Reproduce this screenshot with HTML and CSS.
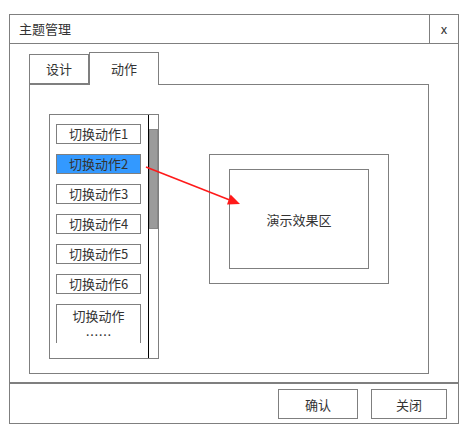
FILE: index.html
```html
<!DOCTYPE html>
<html lang="zh-CN">
<head>
  <meta charset="UTF-8" />
  <title>主题管理</title>
  <link rel="stylesheet" href="styles.css">
</head>
<body>
  <div class="dialog">
    <div class="titlebar">
      <span class="title">主题管理</span>
      <span class="close">x</span>
    </div>

    <div class="dlg-body">
      <div class="tabs">
        <div class="tab">设计</div>
        <div class="tab active">动作</div>
      </div>

      <div class="panel">
        <div class="list">
          <div class="list-items">
            <div class="item">切换动作1</div>
            <div class="item selected">切换动作2</div>
            <div class="item">切换动作3</div>
            <div class="item">切换动作4</div>
            <div class="item">切换动作5</div>
            <div class="item">切换动作6</div>
            <div class="item tall">
              <div>切换动作</div>
              <div class="more">……</div>
            </div>
          </div>
          <div class="scrollbar"><div class="thumb"></div></div>
        </div>

        <div class="demo">
          <div class="demo-inner">演示效果区</div>
        </div>
      </div>
    </div>

    <div class="footer">
      <button class="btn ok">确认</button>
      <button class="btn cancel">关闭</button>
    </div>
  </div>

  <!-- 箭头：从选中项指向演示区 -->
  <svg class="arrow" width="472" height="434" viewBox="0 0 472 434">
    <line x1="146" y1="167" x2="231" y2="200.5" stroke="#ff1a1a" stroke-width="1.6" />
    <polygon points="240,204 230.6,194.6 227,204.5" fill="#ff1a1a" />
  </svg>
</body>
</html>
```

FILE: styles.css
```css
body {
  margin: 0;
  font-family: "Noto Sans CJK SC", "Noto Sans", sans-serif;
  font-size: 13px;
  color: #333;
  background: #fff;
  position: relative;
}
.dialog {
  margin: 14px 0 0 9px;
  width: 450px;
  border: 1px solid #7f7f7f;
  box-sizing: border-box;
}
.titlebar {
  display: flex;
  height: 29px;
  border-bottom: 1px solid #7f7f7f;
  box-sizing: border-box;
}
.title {
  flex: 1;
  padding-left: 9px;
  line-height: 28px;
}
.close {
  width: 29px;
  border-left: 1px solid #7f7f7f;
  box-sizing: border-box;
  text-align: center;
  line-height: 28px;
}
.dlg-body {
  padding: 8px 0 8px 19px;
}
.tabs {
  display: flex;
  align-items: flex-end;
  margin-bottom: -1px;
  position: relative;
  z-index: 1;
}
.tab {
  width: 60px;
  height: 30px;
  margin-bottom: 1px;
  border: 1px solid #7f7f7f;
  box-sizing: border-box;
  text-align: center;
  line-height: 28px;
  background: #fff;
}
.tab.active {
  width: 70px;
  height: 33px;
  margin-bottom: 0;
  padding-top: 2px;
  border-bottom: none;
}
.panel {
  display: flex;
  align-items: flex-start;
  width: 400px;
  height: 290px;
  border: 1px solid #7f7f7f;
  box-sizing: border-box;
  padding: 29px 0 0 19px;
}
.list {
  display: flex;
  width: 110px;
  height: 245px;
  border: 1px solid #7f7f7f;
  box-sizing: border-box;
}
.list-items {
  flex: 1;
  padding: 9px 0 0 6px;
  border-right: 1px solid #000;
  box-sizing: border-box;
}
.item {
  width: 85px;
  height: 20px;
  margin-bottom: 10px;
  border: 1px solid #7f7f7f;
  box-sizing: border-box;
  text-align: center;
  line-height: 18px;
}
.item.selected {
  background: #3399ff;
}
/* 最后一项被列表底部截断，只画上边和两侧 */
.item.tall {
  height: 39px;
  margin-bottom: 0;
  padding-top: 1px;
  border-bottom: none;
  line-height: 20px;
}
.item .more {
  padding-top: 2px;
  line-height: 14px;
}
.scrollbar {
  width: 9px;
  padding-top: 14px;
}
.thumb {
  height: 100px;
  background: #9b9b9b;
  border: 1px solid #888;
  box-sizing: border-box;
}
.demo {
  margin: 40px 0 0 50px;
  width: 180px;
  height: 130px;
  border: 1px solid #7f7f7f;
  box-sizing: border-box;
  padding: 14px 19px;
}
.demo-inner {
  height: 100px;
  border: 1px solid #7f7f7f;
  box-sizing: border-box;
  display: flex;
  align-items: center;
  justify-content: center;
}
.footer {
  display: flex;
  justify-content: flex-end;
  gap: 13px;
  height: 41px;
  border-top: 2px solid #7f7f7f;
  box-sizing: border-box;
  padding: 5px 11px 0 0;
}
.btn {
  height: 30px;
  border: 1px solid #7f7f7f;
  background: #fff;
  color: #333;
  font-family: inherit;
  font-size: 13px;
  padding: 0;
  cursor: pointer;
}
.btn.ok {
  width: 80px;
}
.btn.cancel {
  width: 76px;
}
.arrow {
  position: absolute;
  left: 0;
  top: 0;
  pointer-events: none;
}
```
